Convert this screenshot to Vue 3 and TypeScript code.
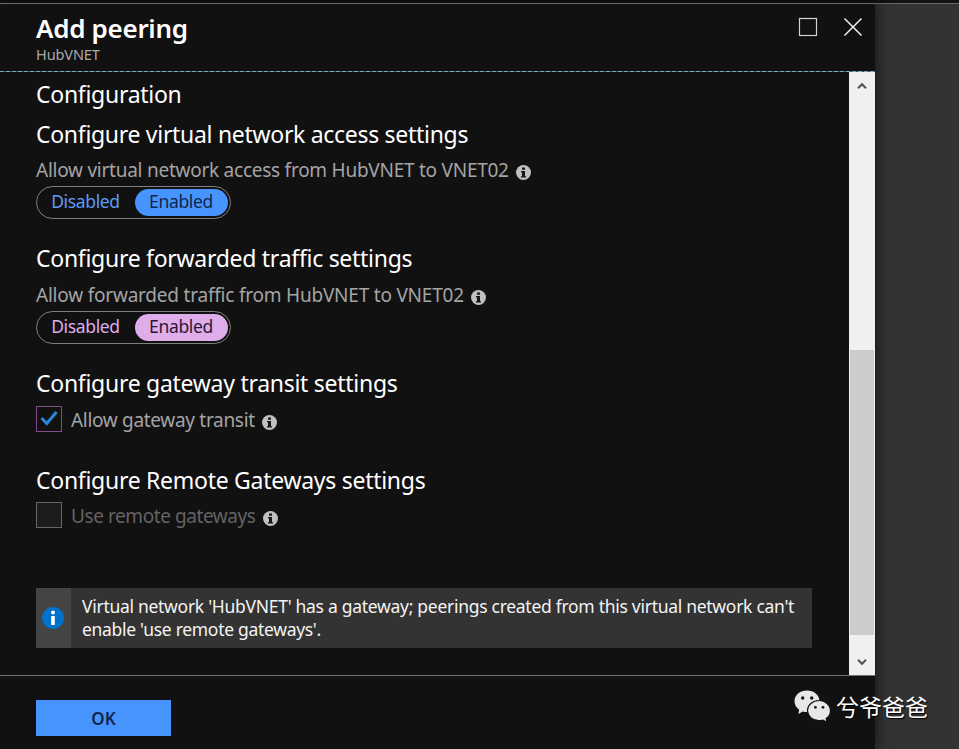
<script setup lang="ts">
import { ref } from 'vue'

const accessEnabled = ref(true)
const trafficEnabled = ref(true)
const gatewayTransit = ref(true)
</script>

<template>
  <div class="page">
    <div class="blade">
      <header class="header">
        <div class="titles">
          <h1>Add peering</h1>
          <p>HubVNET</p>
        </div>
        <div class="window-actions">
          <svg width="20" height="20" viewBox="0 0 20 20" aria-label="Maximize">
            <rect x="1.500" y="1.500" width="17" height="17" fill="none" stroke="#d2d2d2" stroke-width="1.200" />
          </svg>
          <svg width="20" height="20" viewBox="0 0 20 20" aria-label="Close">
            <path d="M1.500 1.500 18.500 18.500M18.500 1.500 1.500 18.500" fill="none" stroke="#f2f2f2" stroke-width="1.500" />
          </svg>
        </div>
      </header>

      <div class="body">
        <main class="content">
          <h2>Configuration</h2>

          <section class="s-access">
            <h2 class="h-access">Configure virtual network access settings</h2>
            <div class="label">
              <span class="l-access">Allow virtual network access from HubVNET to VNET02</span>
              <svg class="info" viewBox="0 0 15 15"><circle cx="7.5" cy="7.5" r="7.5" /><path d="M6 2.600h3v2.200H6zM5 6h4v5.200h1.100v1.200H4.900v-1.200H6V7.200H5z" /></svg>
            </div>
            <div class="toggle blue">
              <button :class="{ on: !accessEnabled }" @click="accessEnabled = false">Disabled</button>
              <button :class="{ on: accessEnabled }" @click="accessEnabled = true">Enabled</button>
            </div>
          </section>

          <section class="s-traffic">
            <h2>Configure forwarded traffic settings</h2>
            <div class="label">
              <span class="l-traffic">Allow forwarded traffic from HubVNET to VNET02</span>
              <svg class="info" viewBox="0 0 15 15"><circle cx="7.5" cy="7.5" r="7.5" /><path d="M6 2.600h3v2.200H6zM5 6h4v5.200h1.100v1.200H4.900v-1.200H6V7.200H5z" /></svg>
            </div>
            <div class="toggle pink">
              <button :class="{ on: !trafficEnabled }" @click="trafficEnabled = false">Disabled</button>
              <button :class="{ on: trafficEnabled }" @click="trafficEnabled = true">Enabled</button>
            </div>
          </section>

          <section class="s-transit">
            <h2>Configure gateway transit settings</h2>
            <div class="check-row">
              <div class="box checked" @click="gatewayTransit = !gatewayTransit">
                <svg v-if="gatewayTransit" width="24" height="24" viewBox="0 0 24 24"><path d="M4.500 11 9.800 16.500 19.500 5" fill="none" stroke="#2b88d8" stroke-width="3" /></svg>
              </div>
              <span class="l-transit">Allow gateway transit</span>
              <svg class="info" viewBox="0 0 15 15"><circle cx="7.5" cy="7.5" r="7.5" /><path d="M6 2.600h3v2.200H6zM5 6h4v5.200h1.100v1.200H4.900v-1.200H6V7.200H5z" /></svg>
            </div>
          </section>

          <section class="s-remote">
            <h2>Configure Remote Gateways settings</h2>
            <div class="check-row disabled">
              <div class="box"></div>
              <span class="l-remote">Use remote gateways</span>
              <svg class="info" viewBox="0 0 15 15"><circle cx="7.5" cy="7.5" r="7.5" /><path d="M6 2.600h3v2.200H6zM5 6h4v5.200h1.100v1.200H4.900v-1.200H6V7.200H5z" /></svg>
            </div>
          </section>

          <div class="notice">
            <div class="notice-icon">
              <svg width="22" height="22" viewBox="0 0 22 22"><circle cx="11" cy="11" r="11" fill="#0072c9" /><circle cx="11" cy="5.600" r="2" fill="#fff" /><rect x="9.200" y="9" width="3.600" height="9" fill="#fff" /></svg>
            </div>
            <p>
              <span class="n-first">Virtual network 'HubVNET' has a gateway; peerings created from this virtual network can't</span><br />
              <span class="n-second">enable 'use remote gateways'.</span>
            </p>
          </div>
        </main>

        <div class="scrollbar">
          <svg width="10" height="8" viewBox="0 0 10 8"><path d="M1 6.200 5 2.200 9 6.200" fill="none" stroke="#505050" stroke-width="2" /></svg>
          <div class="thumb"></div>
          <svg width="10" height="8" viewBox="0 0 10 8"><path d="M1 1.800 5 5.800 9 1.800" fill="none" stroke="#505050" stroke-width="2" /></svg>
        </div>
      </div>

      <footer class="footer">
        <button class="ok">OK</button>
      </footer>
    </div>

    <div class="watermark">
      <svg width="38" height="33" viewBox="0 0 38 33">
        <path d="M13 .5C5.800.5.5 5.200.5 11.300c0 3.500 1.800 6.500 4.700 8.500L4.300 24l4.500-2.500c1.300.4 2.700.6 4.200.6 7.200 0 12.500-4.900 12.500-10.800S20.200.5 13 .5z" fill="#e8e6e8" />
        <path d="M25 10.500c-6.500 0-11.500 4.500-11.500 10S18.500 30.700 25 30.700c1.400 0 2.700-.2 3.900-.6L33 32.300l-.8-3.700c2.600-1.800 4.300-4.700 4.300-8.100 0-5.500-5-10-11.500-10z" fill="#e8e6e8" stroke="#131113" stroke-width="1.200" />
        <g fill="#131113"><circle cx="8.700" cy="8" r="1.700" /><circle cx="17.700" cy="8" r="1.700" /><circle cx="21.400" cy="17.300" r="1.400" /><circle cx="29" cy="17.300" r="1.400" /></g>
      </svg>
      <span>兮爷爸爸</span>
    </div>
  </div>
</template>

<style>
body {
  margin: 0;
  background: #333;
}
</style>

<style scoped>
.page {
  position: relative;
  box-sizing: border-box;
  width: 959px;
  height: 749px;
  padding-top: 3px;
  overflow: hidden;
  background: linear-gradient(#111 3px, #6a6a6a 3px, #6a6a6a 4px, #333 4px);
  font-family: "Noto Sans", "Open Sans", sans-serif;
  color: #fff;
}
.blade {
  display: flex;
  flex-direction: column;
  width: 875px;
  height: 746px;
  background: #121112;
  border-top: 1px solid #6a6a6a;
  box-sizing: border-box;
  box-shadow: 3px 0 12px rgba(0, 0, 0, 0.5);
}
h1, h2, p { margin: 0; font-weight: 400; white-space: nowrap; }
button { font-family: inherit; padding: 0; border: 0; cursor: pointer; }
.header {
  display: flex;
  justify-content: space-between;
  box-sizing: border-box;
  height: 68px;
  flex: none;
  padding: 9px 12px 0 36px;
  background: repeating-linear-gradient(90deg, #7fa9bf 0 4px, #2c5a74 4px 6px) bottom / 100% 1px no-repeat;
}
h1 { font-size: 26px; line-height: 30px; font-weight: 600; letter-spacing: -0.3px; }
.titles p { font-size: 14.500px; line-height: 18px; margin-top: 2px; color: #aaa; letter-spacing: -0.1px; }
.window-actions { display: flex; gap: 25px; padding-top: 4px; }
.body { display: flex; height: 603px; flex: none; }
.content { display: flex; flex-direction: column; flex: 1; padding: 7px 37px 0 36px; }
h2 { font-size: 23px; line-height: 30px; height: 30px; letter-spacing: -0.28px; }
.h-access { letter-spacing: -0.3px; }
.s-access { margin-top: 10px; height: 124px; }
.s-traffic { height: 125px; }
.s-transit { height: 97px; }
.s-remote { height: 123px; }
.label, .check-row { display: flex; align-items: center; gap: 7px; color: #a4a4a4; font-size: 19px; white-space: nowrap; }
.label { height: 26px; margin-top: 8px; }
.s-access .label { margin-top: 7px; }
.label .info { margin-top: 6px; }
.label span, .check-row span { padding-top: 2px; }
.l-access { letter-spacing: -0.25px; }
.l-traffic { letter-spacing: -0.21px; }
.l-transit { letter-spacing: -0.31px; }
.l-remote { letter-spacing: -0.42px; }
.info { flex: none; width: 15px; height: 15px; }
.info circle { fill: #c0c0c0; }
.info path { fill: #161616; }
.toggle {
  display: flex;
  justify-content: space-between;
  box-sizing: border-box;
  width: 195px;
  height: 33px;
  margin-top: 4px;
  padding: 2px;
  border: 1px solid #808080;
  border-radius: 17px;
}
.toggle button { width: 93px; height: 27px; padding: 0 1px 2px 0; border-radius: 14px; background: transparent; font-size: 17.500px; line-height: 25px; letter-spacing: -0.35px; }
.toggle button:first-child { width: 94px; }
.blue button { color: #5c9cf5; }
.blue .on { background: #4894fe; color: #10264c; }
.pink button { color: #dcaeea; }
.pink .on { background: #dfaeea; color: #2c1638; }
.check-row { height: 26px; margin-top: 8px; }
.check-row.disabled { margin-top: 7px; }
.check-row .info { margin-top: 6px; }
.box { flex: none; box-sizing: border-box; width: 26px; height: 26px; margin-right: 2px; border: 1px solid #666; background: #1c1c1c; }
.box.checked { border-color: #824a8e; background: #121112; }
.disabled { color: #636363; }
.notice { display: flex; height: 60px; width: 776px; background: #333; }
.notice-icon { flex: none; display: flex; align-items: center; justify-content: center; width: 34px; padding-right: 1px; background: #454445; box-sizing: border-box; width: 35px; }
.notice p { padding: 7px 0 0 11px; font-size: 17.500px; line-height: 23px; color: #f4f4f4; }
.n-first { letter-spacing: -0.285px; }
.n-second { letter-spacing: -0.3px; }
.scrollbar { display: flex; flex-direction: column; align-items: center; box-sizing: border-box; width: 26px; padding: 10px 0 9px; background: #f1f0f1; }
.thumb { width: 24px; height: 285px; margin-top: 260px; margin-bottom: 23px; background: #cdcccd; }
.footer { flex: 1; padding: 24px 36px 0; border-top: 1px solid #737273; }
.ok { display: block; width: 135px; height: 36px; background: #4894fe; color: #10264c; font-size: 17px; font-weight: 600; }
.watermark { position: absolute; left: 794px; top: 690px; display: flex; gap: 4px; font: 23px/32px "Noto Sans CJK SC", sans-serif; white-space: nowrap; text-shadow: 1px 1px 1px #000; }
</style>
